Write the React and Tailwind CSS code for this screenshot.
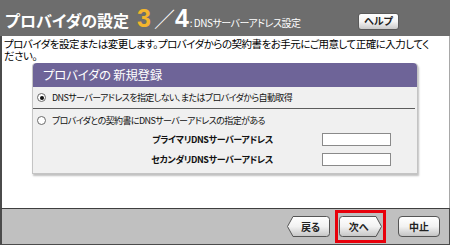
import React from 'react';

const jp = "font-['Noto_Sans_CJK_JP','Noto_Sans',sans-serif] [font-feature-settings:'palt']";

const Radio = ({ checked }) => (
	<span className="w-[9px] h-[9px] rounded-full border border-[#6a6a6a] bg-white flex items-center justify-center shrink-0">
		{checked && <span className="w-[4px] h-[4px] rounded-full bg-[#111]"></span>}
	</span>
);

const ArrowButton = ({ label, dir }) => (
	<div className="relative w-[43px] h-[21px] flex items-center justify-center">
		<svg className="absolute inset-0" width="43" height="21" viewBox="0 0 43 21">
			<defs>
				<linearGradient id={`g-${dir}`} x1="0" y1="0" x2="0" y2="1">
					<stop offset="0" stopColor="#ffffff" />
					<stop offset="0.5" stopColor="#f2f2f2" />
					<stop offset="1" stopColor="#c4c4c4" />
				</linearGradient>
			</defs>
			{dir === 'left' ? (
				<path d="M0.5 10.5 L6 0.5 H39.5 Q42.5 0.5 42.5 3.5 V17.5 Q42.5 20.5 39.5 20.5 H6 Z" fill={`url(#g-${dir})`} stroke="#555" />
			) : (
				<path d="M42.5 10.5 L37 0.5 H3.5 Q0.5 0.5 0.5 3.5 V17.5 Q0.5 20.5 3.5 20.5 H37 Z" fill={`url(#g-${dir})`} stroke="#555" />
			)}
		</svg>
		<span className={`relative text-[10px] font-bold text-[#222] ${dir === 'left' ? 'ml-[4px]' : 'mr-[4px]'}`}>{label}</span>
	</div>
);

const App = () => {
	return (
		<div className={`w-[450px] h-[245px] flex flex-col bg-white overflow-hidden ${jp}`}>
			<header className="h-[36px] shrink-0 bg-[#6d6d6d] flex items-center pl-[5px] pr-[51px]">
				<div className="flex items-baseline text-white">
					<span className="text-[16px] font-bold leading-none">プロバイダの設定</span>
					<span className="ml-[8px] text-[25px] font-bold leading-none text-[#f3b52c] font-['Liberation_Sans',sans-serif]">3</span>
					<span className="ml-[3px] text-[21px] font-light leading-none">／</span>
					<span className="text-[25px] font-bold leading-none font-['Liberation_Sans',sans-serif]">4</span>
					<span className="ml-[1px] text-[10px] tracking-[-0.5px] leading-none">: DNSサーバーアドレス設定</span>
				</div>
				<div className="ml-auto mt-[6px] w-[41px] h-[17px] rounded-[3px] border border-[#5a5a5a] bg-gradient-to-b from-white via-[#f4f4f4] to-[#c9c9c9] flex items-center justify-center">
					<span className="text-[10px] font-bold text-[#222] leading-none">ヘルプ</span>
				</div>
			</header>

			<main className="flex-1 border-l-2 border-l-[#4b4b4b] border-r border-r-[#a8a8a8] pl-[2px] pr-[2px] pt-[2px]">
				<p className="text-[10.5px] leading-[12px] tracking-[-0.5px] text-black">
					プロバイダを設定または変更します。プロバイダからの契約書をお手元にご用意して正確に入力してく<br />ださい。
				</p>

				<section className="mt-[1px] ml-[28px] w-[386px] rounded-t-[4px] shadow-[1px_2px_2px_rgba(0,0,0,0.25)] border border-[#c4c4c4] border-t-0 bg-[#f0f0f0]">
					<div className="h-[24px] bg-[#6e6498] rounded-t-[4px] flex items-center pl-[10px]">
						<span className="text-[12.5px] tracking-[-0.3px] text-white leading-none">プロバイダの 新規登録</span>
					</div>
					<div className="h-[22px] flex items-center gap-[6px] pl-[4px] border-b border-[#5c5c5c] mr-[2px]">
						<Radio checked />
						<span className="text-[9px] tracking-[-0.6px] text-[#111] leading-none">DNSサーバーアドレスを指定しない、またはプロバイダから自動取得</span>
					</div>
					<div className="pt-[5px] pb-[7px]">
						<div className="h-[12px] flex items-center gap-[6px] pl-[4px]">
							<Radio />
							<span className="text-[9px] tracking-[-0.6px] text-[#111] leading-none">プロバイダとの契約書にDNSサーバーアドレスの指定がある</span>
						</div>
						<div className="mt-[7px] flex items-center">
							<span className="w-[240px] text-right text-[9px] tracking-[-0.4px] font-bold text-[#111] leading-none">プライマリDNSサーバーアドレス</span>
							<span className="ml-[49px] w-[69px] h-[13px] bg-white border border-[#8a8a8a]"></span>
						</div>
						<div className="mt-[7px] flex items-center">
							<span className="w-[240px] text-right text-[9px] tracking-[-0.4px] font-bold text-[#111] leading-none">セカンダリDNSサーバーアドレス</span>
							<span className="ml-[49px] w-[69px] h-[13px] bg-white border border-[#8a8a8a]"></span>
						</div>
					</div>
				</section>
			</main>

			<footer className="h-[37px] shrink-0 bg-[#c0c0c0] border-t border-t-[#3f3f3f] border-l-2 border-l-[#4b4b4b] border-r border-r-[#4b4b4b] border-b border-b-[#4b4b4b] flex items-center justify-end pr-[9px]">
				<ArrowButton label="戻る" dir="left" />
				<div className="ml-[5px] border-[3px] border-[#e8000b] px-[1px] py-[3px]">
					<ArrowButton label="次へ" dir="right" />
				</div>
				<div className="ml-[12px] w-[42px] h-[21px] rounded-[4px] border border-[#555] bg-gradient-to-b from-white via-[#f2f2f2] to-[#c4c4c4] flex items-center justify-center">
					<span className="text-[10px] font-bold text-[#222] leading-none">中止</span>
				</div>
			</footer>
		</div>
	);
};

export default App;
